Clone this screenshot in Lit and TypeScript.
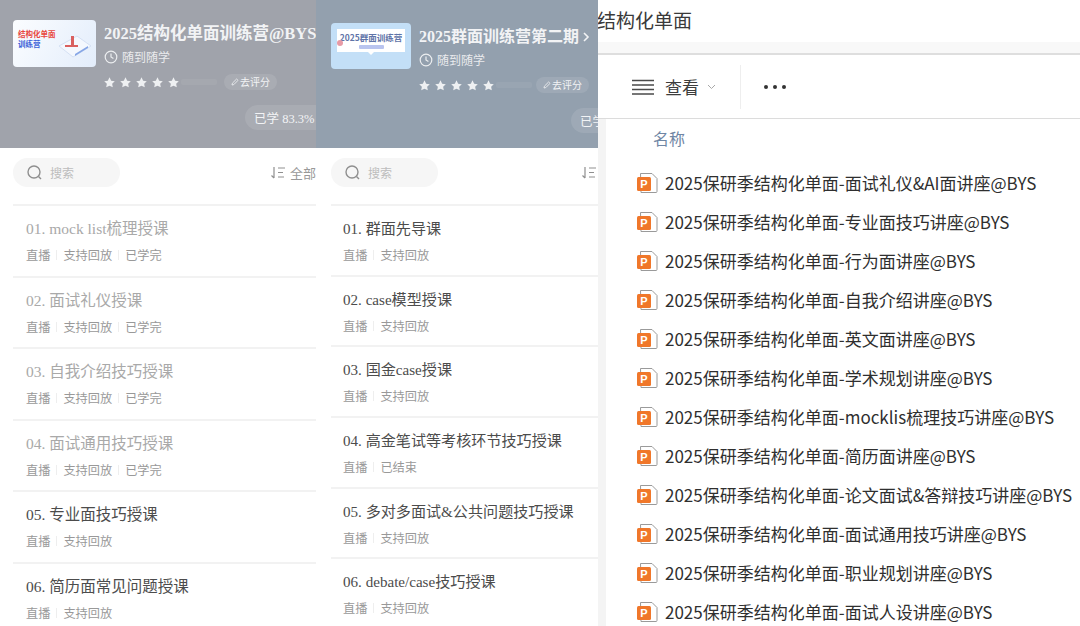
import { LitElement, html, css, svg } from 'lit';
import { customElement, property } from 'lit/decorators.js';

type Lesson = { name: string; tags: string[]; done?: boolean };

const first: Lesson[] = [
  { name: '01. mock list梳理授课', tags: ['直播', '支持回放', '已学完'], done: true },
  { name: '02. 面试礼仪授课', tags: ['直播', '支持回放', '已学完'], done: true },
  { name: '03. 自我介绍技巧授课', tags: ['直播', '支持回放', '已学完'], done: true },
  { name: '04. 面试通用技巧授课', tags: ['直播', '支持回放', '已学完'], done: true },
  { name: '05. 专业面技巧授课', tags: ['直播', '支持回放'] },
  { name: '06. 简历面常见问题授课', tags: ['直播', '支持回放'] },
];

const second: Lesson[] = [
  { name: '01. 群面先导课', tags: ['直播', '支持回放'] },
  { name: '02. case模型授课', tags: ['直播', '支持回放'] },
  { name: '03. 国金case授课', tags: ['直播', '支持回放'] },
  { name: '04. 高金笔试等考核环节技巧授课', tags: ['直播', '已结束'] },
  { name: '05. 多对多面试&公共问题技巧授课', tags: ['直播', '支持回放'] },
  { name: '06. debate/case技巧授课', tags: ['直播', '支持回放'] },
];

const files = [
  '面试礼仪&AI面讲座', '专业面技巧讲座', '行为面讲座', '自我介绍讲座', '英文面讲座', '学术规划讲座',
  'mocklis梳理技巧讲座', '简历面讲座', '论文面试&答辩技巧讲座', '面试通用技巧讲座', '职业规划讲座', '面试人设讲座',
];

const star = svg`<path d="M5 .3l1.500 3 3.300.5-2.400 2.300.6 3.300L5 7.900 2 9.400l.6-3.300L.2 3.800l3.300-.5z" fill="#eef0f2"/>`;

@customElement('course-pane')
class CoursePane extends LitElement {
  static styles = css`
    :host {
      display: block;
      height: 626px;
      overflow: hidden;
      background: #fff;
      font-family: 'Liberation Serif', 'Noto Sans CJK SC', serif;
    }
    :host([kind='a']) { width: 316px; --bg: #a0a3ab; --thumb-w: 83px; --thumb-h: 47px; --pad: 13px; --top: 20px; --pill: 232px; --sort: 150px; --row: 71.5px; --name: 15.5px; --inset: 13px; --title: 16.5px; --go: 7px; }
    :host([kind='b']) { width: 282px; --bg: #93a0ae; --thumb-w: 80px; --thumb-h: 46px; --pad: 15px; --top: 23px; --pill: 240px; --sort: 143px; --row: 70.7px; --name: 15.1px; --inset: 12px; --title: 16px; --go: 4px; }
    .head {
      height: 148px;
      box-sizing: border-box;
      padding: var(--top) 0 0 var(--pad);
      background: var(--bg);
      color: #f2f3f5;
      overflow: hidden;
    }
    .top { display: flex; gap: 8px; }
    .thumb {
      position: relative;
      flex: none;
      width: var(--thumb-w);
      height: var(--thumb-h);
      border-radius: 4px;
      overflow: hidden;
      font-family: 'Noto Sans CJK SC', sans-serif;
      font-weight: 700;
    }
    .thumb.a { background: linear-gradient(120deg, #fbfdff, #e3edfb); }
    .thumb.b { background: #c3dff7; }
    .thumb.a .l1 { position: absolute; left: 5px; top: 8px; font-size: 7.500px; line-height: 11px; color: #e8463f; white-space: nowrap; }
    .thumb.a .l2 { position: absolute; left: 5px; top: 18px; font-size: 7.500px; line-height: 11px; color: #3b62d8; white-space: nowrap; }
    .thumb.a svg { position: absolute; left: 40px; top: 8px; }
    .thumb.b .card { position: absolute; left: 6px; top: 6px; width: 68px; height: 23px; background: #fff; text-align: center; }
    .thumb.b .card::after {
      content: '';
      position: absolute;
      left: 31px;
      bottom: -3px;
      border: solid transparent;
      border-width: 3px 3px 0;
      border-top-color: #fff;
    }
    .thumb.b .dot { position: absolute; left: 6px; top: 17px; width: 6px; height: 6px; border-radius: 50%; background: #e79aa6; }
    .thumb.b .l1 { font-size: 8.500px; line-height: 13px; margin-top: 2px; color: #5f74a8; white-space: nowrap; }
    .thumb.b .bar { width: 25px; height: 4px; margin: 1px auto 0; background: #b9c4ef; border-radius: 1px; }
    .info { min-width: 0; flex: none; }
    .title { font-size: var(--title); font-weight: 700; line-height: 24px; white-space: nowrap; margin-top: 2px; display: flex; align-items: center; gap: 3px; }
    .when { display: flex; align-items: center; gap: 4px; font-size: 12px; line-height: 18px; margin-top: 2px; color: #e9eaed; font-family: 'Noto Sans CJK SC', sans-serif; }
    .rate { display: flex; align-items: center; margin-top: 8px; height: 16px; }
    .stars { display: flex; gap: 5px; }
    .ghost { width: 36px; height: 6px; margin-left: 2px; background: rgba(255, 255, 255, 0.06); border-radius: 2px; }
    .go {
      margin-left: var(--go);
      padding: 0 7px;
      height: 16px;
      line-height: 16px;
      border-radius: 8px;
      background: rgba(255, 255, 255, 0.1);
      font-size: 10px;
      font-family: 'Noto Sans CJK SC', sans-serif;
      white-space: nowrap;
      display: flex;
      align-items: center;
      gap: 1px;
    }
    .pill {
      width: 100px;
      height: 25px;
      margin-left: var(--pill);
      margin-top: 15px;
      padding-left: 9px;
      box-sizing: border-box;
      border-radius: 13px 0 0 13px;
      background: rgba(255, 255, 255, 0.1);
      font-size: 12.500px;
      line-height: 25px;
      white-space: nowrap;
    }
    .pill span { font-family: 'Noto Sans CJK SC', sans-serif; }
    .tools { display: flex; align-items: flex-start; height: 56px; padding: 10px 0 0 var(--pad); box-sizing: border-box; font-family: 'Noto Sans CJK SC', sans-serif; white-space: nowrap; }
    .search { width: 107px; height: 29px; border-radius: 15px; background: #f6f6f6; display: flex; align-items: center; gap: 6px; padding-left: 13px; box-sizing: border-box; font-size: 12px; color: #bdbdbd; flex: none; }
    .sort { margin-left: var(--sort); height: 29px; display: flex; align-items: center; gap: 4px; font-size: 13px; color: #999; flex: none; }
    .list { margin-left: var(--pad); }
    .row { height: var(--row); box-sizing: border-box; border-top: 2px solid #f2f2f2; padding: 13px 0 0 var(--inset); }
    .name { font-size: var(--name); line-height: 20px; color: #4c4c4c; white-space: nowrap; }
    .row.done .name { color: #a9a9a9; }
    .tags { display: flex; align-items: center; margin-top: 8px; font-family: 'Noto Sans CJK SC', sans-serif; font-size: 12.200px; line-height: 16px; color: #999; }
    .tags i { width: 1px; height: 10px; margin: 0 6px; background: #eee; }
  `;

  @property({ reflect: true }) kind = 'a';
  @property() heading = '';
  @property({ type: Boolean }) arrow = false;
  @property({ attribute: false }) lessons: Lesson[] = [];

  render() {
    return html`
      <div class="head">
        <div class="top">
          ${this.kind === 'a'
            ? html`<div class="thumb a">
                <div class="l1">结构化单面</div>
                <div class="l2">训练营</div>
                <svg width="42" height="36" viewBox="0 0 42 36">
                  <path d="M6 18L24 8l14 10-18 11z" fill="#f4f8fe" stroke="#d5e1f4"/>
                  <path d="M18 8h3v9h4v2H12v-2h6z" fill="#d9605f"/>
                  <path d="M22 26l13-8v2l-13 8z" fill="#86a6e6"/>
                </svg>
              </div>`
            : html`<div class="thumb b">
                <div class="card">
                  <div class="l1">2025群面训练营</div>
                  <div class="bar"></div>
                </div>
                <div class="dot"></div>
              </div>`}
          <div class="info">
            <div class="title">
              ${this.heading}
              ${this.arrow
                ? html`<svg width="8" height="12" viewBox="0 0 8 12"><path d="M2 2l4 4-4 4" fill="none" stroke="#f2f3f5" stroke-width="1.6"/></svg>`
                : ''}
            </div>
            <div class="when">
              <svg width="14" height="14" viewBox="0 0 14 14" fill="none" stroke="#eceef0" stroke-width="1.2">
                <circle cx="7" cy="7" r="5.800"/><path d="M7 3.600V7l2.400 1.600"/>
              </svg>
              随到随学
            </div>
            <div class="rate">
              <div class="stars">
                ${[0, 1, 2, 3, 4].map(() => html`<svg width="11" height="11" viewBox="0 0 10 10">${star}</svg>`)}
              </div>
              <div class="ghost"></div>
              <div class="go">
                <svg width="8" height="8" viewBox="0 0 8 8" fill="none" stroke="#e6e8eb"><path d="M1 7l.4-1.800L5.600 1 7 2.400 2.800 6.600z"/></svg>
                去评分
              </div>
            </div>
          </div>
        </div>
        <div class="pill"><span>已学</span> 83.3%</div>
      </div>
      <div class="tools">
        <div class="search">
          <svg width="18" height="18" viewBox="0 0 18 18" fill="none" stroke="#8f8f8f" stroke-width="1.4">
            <circle cx="8" cy="8" r="6"/><path d="M12.500 12.500L15 15"/>
          </svg>
          <span>搜索</span>
        </div>
        <div class="sort">
          <svg width="16" height="14" viewBox="0 0 16 14" fill="none" stroke="#8f8f8f" stroke-width="1.2">
            <path d="M4 1v11M1.500 9.500L4 12M8 2h7M8 6.500h5M8 11h6"/>
          </svg>
          全部
        </div>
      </div>
      <div class="list">
        ${this.lessons.map(
          (l) => html`
            <div class="row ${l.done ? 'done' : ''}">
              <div class="name">${l.name}</div>
              <div class="tags">
                ${l.tags.map((t, i) => html`${i ? html`<i></i>` : ''}<span>${t}</span>`)}
              </div>
            </div>
          `,
        )}
      </div>
    `;
  }
}

@customElement('file-pane')
class FilePane extends LitElement {
  static styles = css`
    :host {
      display: block;
      flex: 1;
      height: 626px;
      overflow: hidden;
      background: #fff;
      font-family: 'Noto Sans CJK SC', sans-serif;
      color: #333;
    }
    .bar { height: 42px; font-size: 19px; line-height: 39px; white-space: nowrap; color: #3a3a3a; margin-left: -1px; }
    .band { height: 11px; background: #f8f8f8; border-bottom: 2px solid #dedede; }
    .toolbar { display: flex; align-items: center; height: 64px; border-bottom: 1px solid #dcdcdc; padding-left: 34px; box-sizing: border-box; }
    .toolbar .see { font-size: 17px; margin-left: 11px; color: #3c3c3c; }
    .toolbar .chev { margin-left: 8px; }
    .toolbar .split { width: 1px; height: 44px; margin-left: 24px; background: #eee; }
    .dots { margin-left: 23px; display: flex; gap: 5px; }
    .dots i { width: 4px; height: 4px; border-radius: 50%; background: #333; }
    .body { display: flex; }
    .strip { flex: none; width: 8px; height: 508px; background: #f4f4f4; }
    .main { flex: 1; min-width: 0; padding-left: 31px; }
    .col { height: 44px; padding-left: 16px; font-size: 16px; line-height: 38px; color: #6f86a4; }
    .file { display: flex; align-items: center; height: 39px; gap: 7px; font-size: 17px; white-space: nowrap; color: #2f2f2f; }
  `;

  render() {
    return html`
      <div class="bar">结构化单面</div>
      <div class="band"></div>
      <div class="toolbar">
        <svg width="22" height="16" viewBox="0 0 22 16" stroke="#4a4a4a" stroke-width="1.3">
          <path d="M0 1.500h22M0 6h22M0 10.500h22M0 15h22"/>
        </svg>
        <span class="see">查看</span>
        <svg class="chev" width="9" height="6" viewBox="0 0 9 6" fill="none" stroke="#a8a8a8"><path d="M1 1l3.500 3.500L8 1"/></svg>
        <div class="split"></div>
        <div class="dots"><i></i><i></i><i></i></div>
      </div>
      <div class="body">
        <div class="strip"></div>
        <div class="main">
          <div class="col">名称</div>
          ${files.map(
            (f) => html`
              <div class="file">
                <svg width="21" height="22" viewBox="0 0 21 22">
                  <path d="M3.500 1.500h11.500l5 5v13a1 1 0 0 1-1 1h-15z" fill="#fff" stroke="#9a9a9a"/>
                  <rect x="0" y="5" width="14" height="14" rx="1.500" fill="#f0772a"/>
                  <text x="7" y="15.500" font-size="11" font-weight="700" font-family="Liberation Sans, sans-serif" text-anchor="middle" fill="#fff">P</text>
                </svg>
                <span>2025保研季结构化单面-${f}@BYS</span>
              </div>
            `,
          )}
        </div>
      </div>
    `;
  }
}

@customElement('app-root')
export class AppRoot extends LitElement {
  static styles = css`
    :host { display: flex; width: 1080px; height: 626px; overflow: hidden; background: #fff; }
    course-pane { flex: none; }
  `;

  render() {
    return html`
      <course-pane kind="a" heading="2025结构化单面训练营@BYS" .lessons=${first}></course-pane>
      <course-pane kind="b" heading="2025群面训练营第二期" arrow .lessons=${second}></course-pane>
      <file-pane></file-pane>
    `;
  }
}
